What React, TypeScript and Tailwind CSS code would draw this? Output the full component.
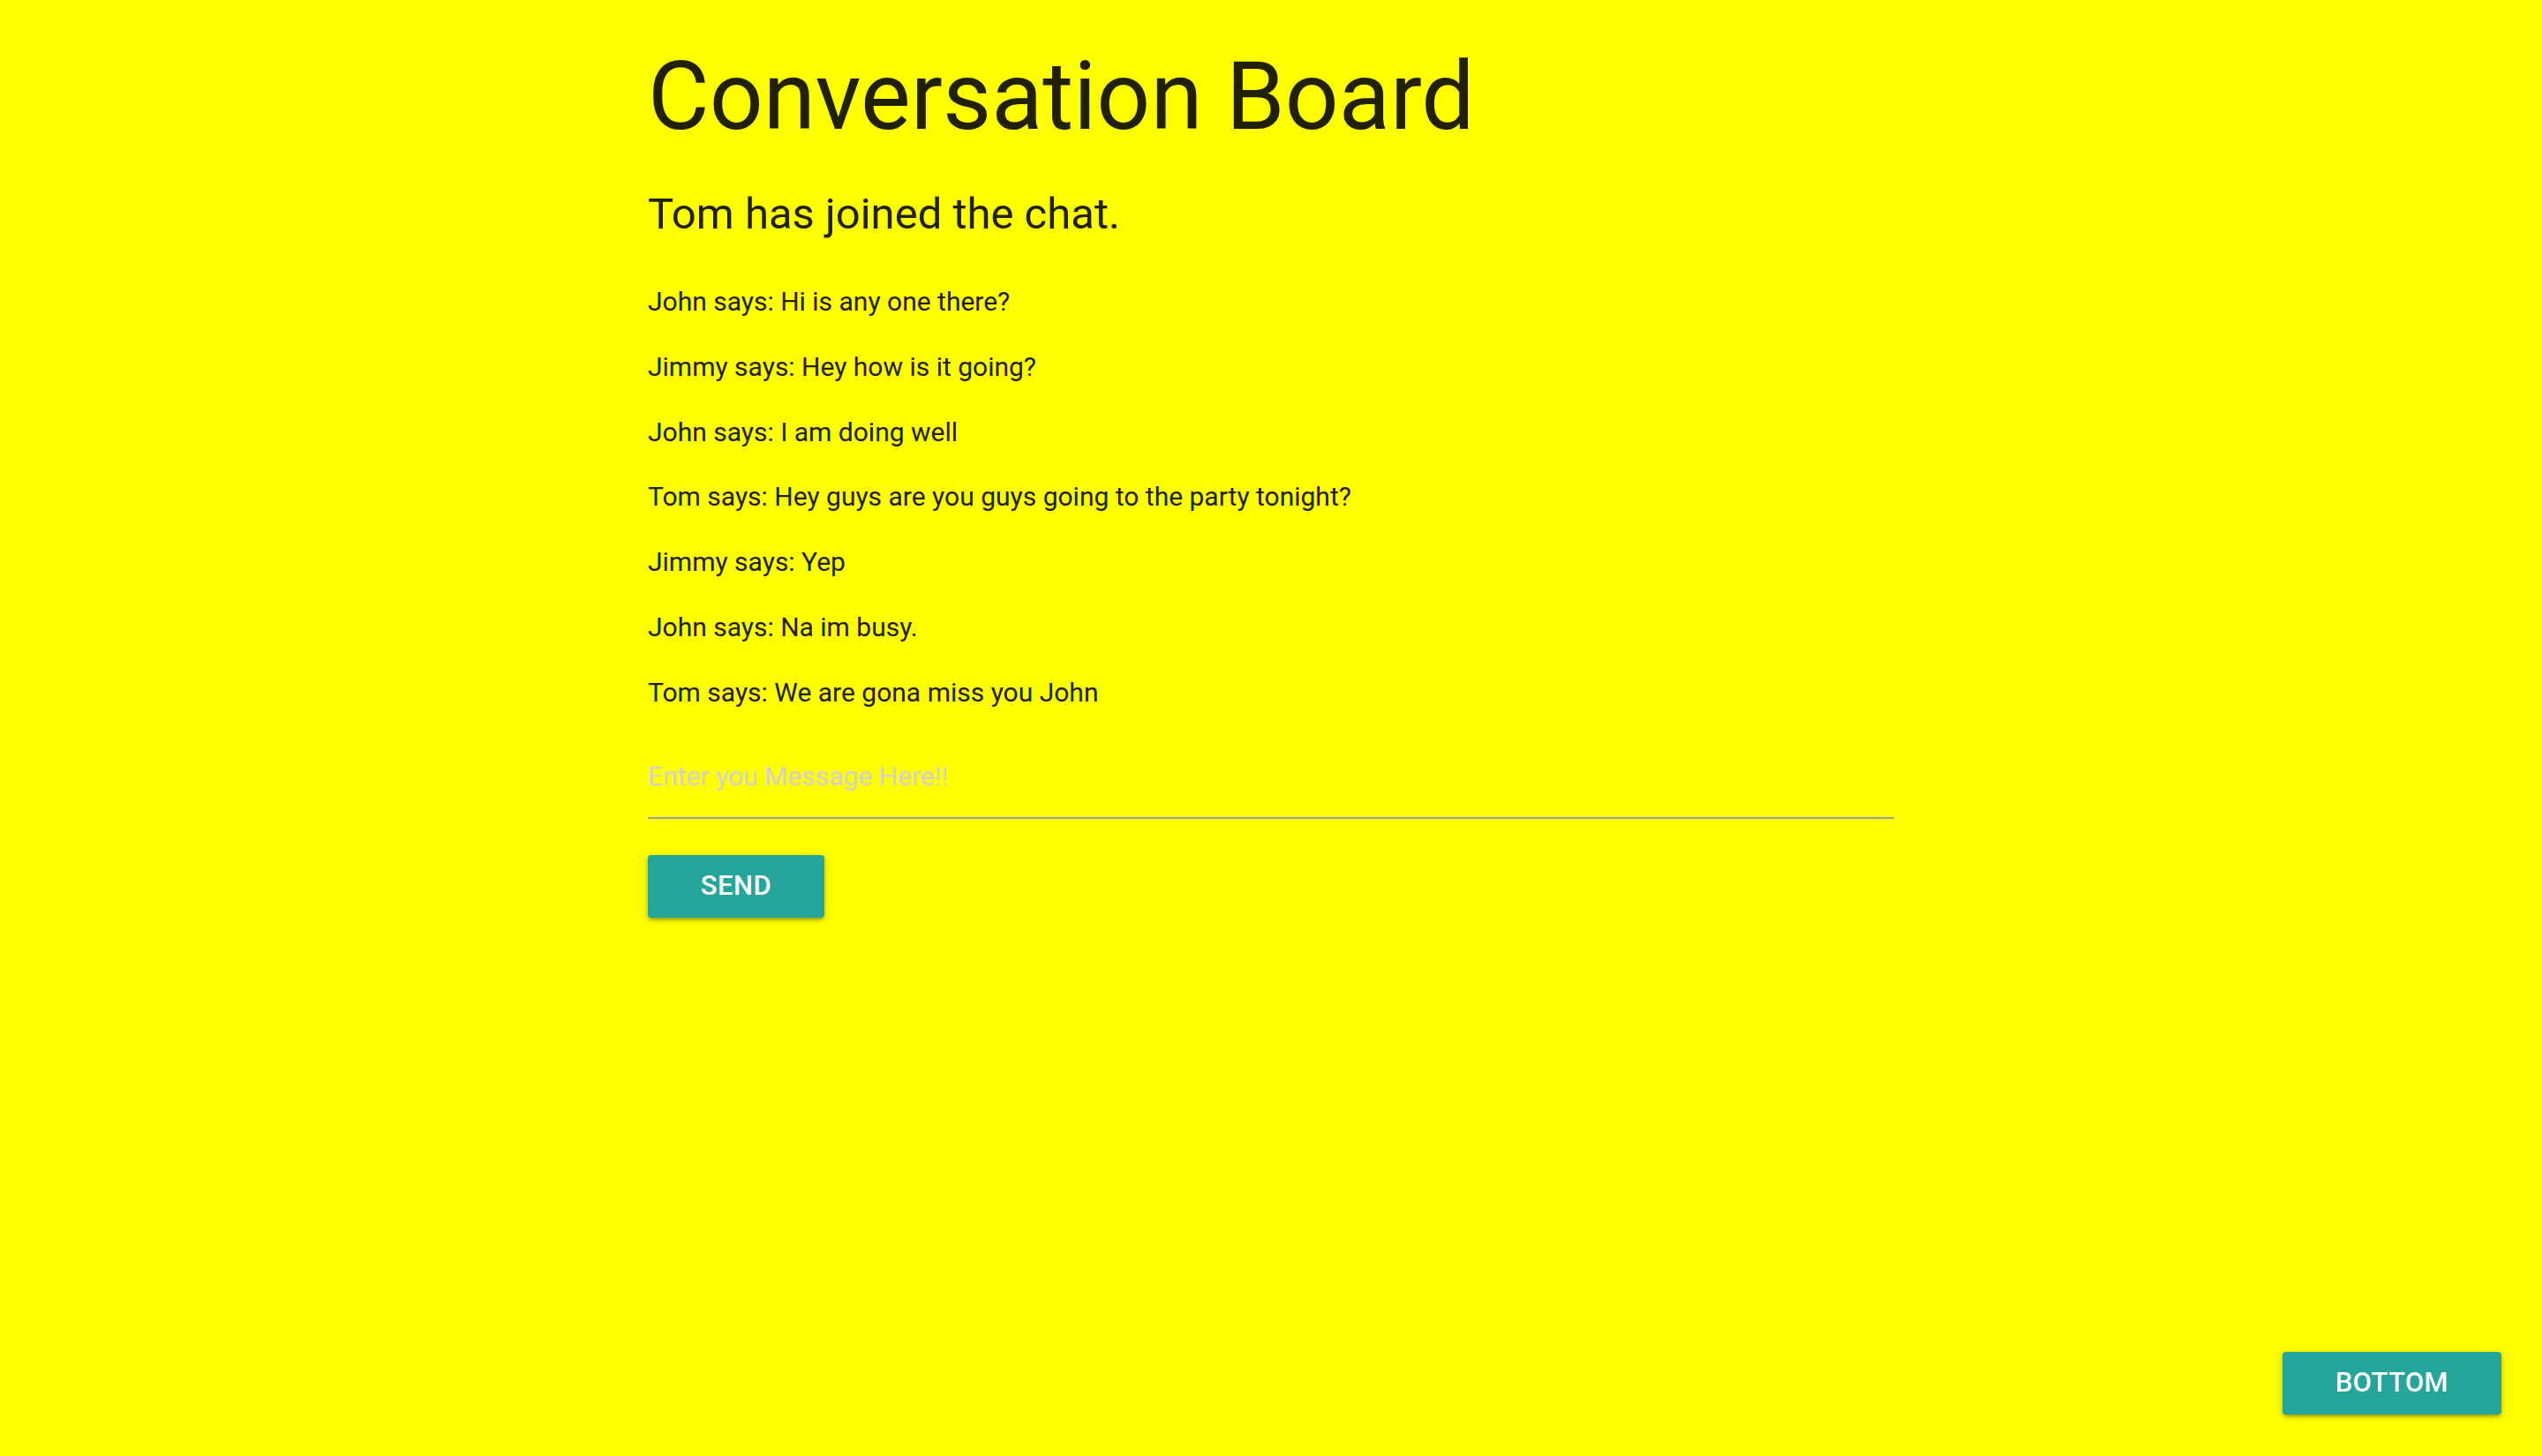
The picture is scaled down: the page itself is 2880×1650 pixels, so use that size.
import React from "react";

const messages = [
  "John says: Hi is any one there?",
  "Jimmy says: Hey how is it going?",
  "John says: I am doing well",
  "Tom says: Hey guys are you guys going to the party tonight?",
  "Jimmy says: Yep",
  "John says: Na im busy.",
  "Tom says: We are gona miss you John",
];

export default function App() {
  return (
    <div
      className="min-h-[1650px] w-full bg-[#ffff00] text-[#212100]"
      style={{ fontFamily: "Roboto, 'Noto Sans', sans-serif" }}
    >
      <div className="mx-auto w-[1412px] flex flex-col pt-[51px]">
        <h1 className="text-[107px] leading-[118px] font-normal">Conversation Board</h1>
        <h5 className="mt-[47px] text-[49px] leading-[54px] font-normal">Tom has joined the chat.</h5>
        <div className="mt-[50px] flex flex-col gap-[29.8px]">
          {messages.map((m, i) => (
            <p key={i} className="text-[30px] leading-[44px]">
              {m}
            </p>
          ))}
        </div>
        <input
          type="text"
          placeholder="Enter you Message Here!!"
          className="mt-[37px] h-[84px] w-full border-b-2 border-[#9e9e9e] bg-transparent pb-[10px] text-[30px] outline-none placeholder:text-[#d1d1d1]"
        />
        <div className="mt-[41px]">
          <button className="flex h-[71px] w-[200px] items-center justify-center rounded-[4px] bg-[#26a69a] text-[31px] font-medium uppercase tracking-[0.5px] text-white shadow-[0_3px_4px_0_rgba(0,0,0,0.14),0_5px_2px_-3px_rgba(0,0,0,0.12),0_2px_9px_0_rgba(0,0,0,0.2)]">
            Send
          </button>
        </div>
      </div>
      <button className="fixed bottom-[47px] right-[46px] flex h-[71px] w-[248px] items-center justify-center rounded-[4px] bg-[#26a69a] text-[31px] font-medium uppercase tracking-[0.3px] text-white shadow-[0_3px_4px_0_rgba(0,0,0,0.14),0_5px_2px_-3px_rgba(0,0,0,0.12),0_2px_9px_0_rgba(0,0,0,0.2)]">
        Bottom
      </button>
    </div>
  );
}
